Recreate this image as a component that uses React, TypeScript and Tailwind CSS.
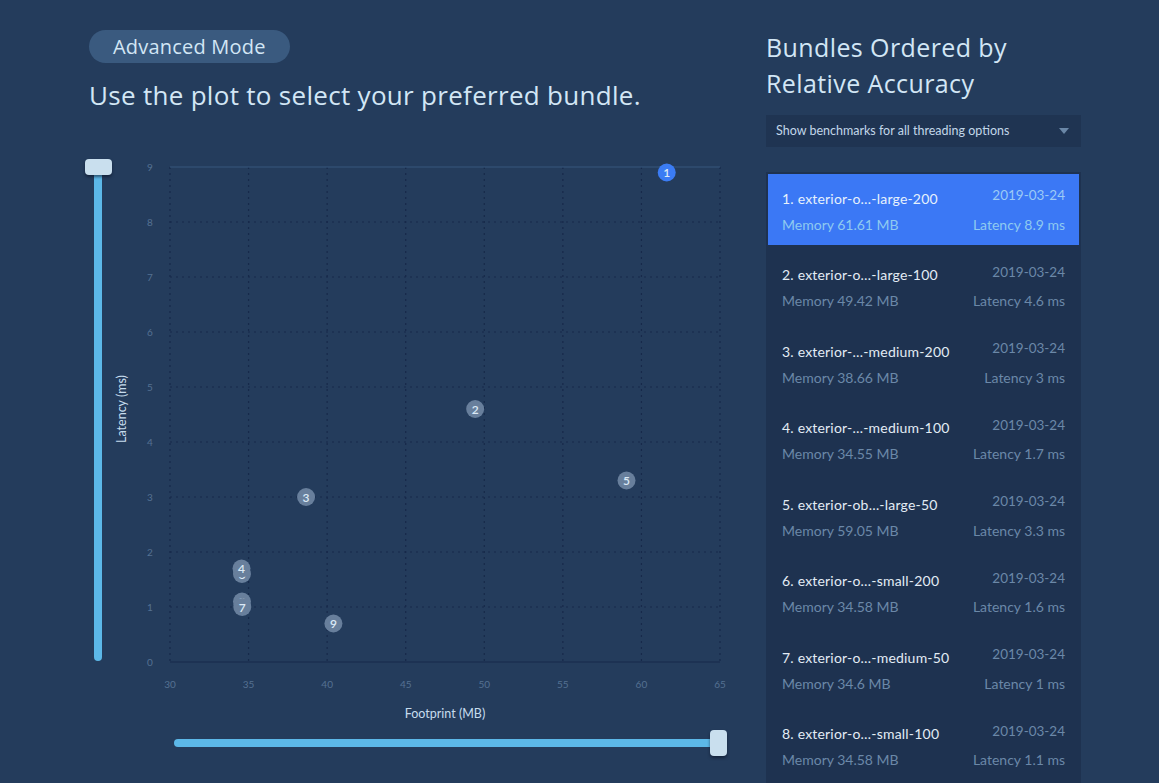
import React from 'react';

interface Bundle {
  id: number;
  name: string;
  date: string;
  memory: string;
  latency: string;
}

interface Point {
  id: number;
  x: number;
  y: number;
}

const bundles: Bundle[] = [
  { id: 1, name: 'exterior-o…-large-200', date: '2019-03-24', memory: '61.61 MB', latency: '8.9 ms' },
  { id: 2, name: 'exterior-o…-large-100', date: '2019-03-24', memory: '49.42 MB', latency: '4.6 ms' },
  { id: 3, name: 'exterior-…-medium-200', date: '2019-03-24', memory: '38.66 MB', latency: '3 ms' },
  { id: 4, name: 'exterior-…-medium-100', date: '2019-03-24', memory: '34.55 MB', latency: '1.7 ms' },
  { id: 5, name: 'exterior-ob…-large-50', date: '2019-03-24', memory: '59.05 MB', latency: '3.3 ms' },
  { id: 6, name: 'exterior-o…-small-200', date: '2019-03-24', memory: '34.58 MB', latency: '1.6 ms' },
  { id: 7, name: 'exterior-o…-medium-50', date: '2019-03-24', memory: '34.6 MB', latency: '1 ms' },
  { id: 8, name: 'exterior-o…-small-100', date: '2019-03-24', memory: '34.58 MB', latency: '1.1 ms' },
];

// drawn in this order so the lower ids end up on top
const points: Point[] = [
  { id: 6, x: 34.58, y: 1.6 },
  { id: 4, x: 34.55, y: 1.7 },
  { id: 8, x: 34.58, y: 1.1 },
  { id: 7, x: 34.6, y: 1.0 },
  { id: 9, x: 40.4, y: 0.7 },
  { id: 3, x: 38.66, y: 3.0 },
  { id: 5, x: 59.05, y: 3.3 },
  { id: 2, x: 49.42, y: 4.6 },
  { id: 1, x: 61.61, y: 8.9 },
];

const sx = (v: number) => 58 + ((v - 30) * 550) / 35;
const sy = (v: number) => 508 - v * 55;

const Plot: React.FC = () => {
  const xTicks = [30, 35, 40, 45, 50, 55, 60, 65];
  const yTicks = [0, 1, 2, 3, 4, 5, 6, 7, 8, 9];

  return (
    <svg width={630} height={570} className="block" style={{ fontFamily: 'Lato, "Open Sans", sans-serif' }}>
      {yTicks.map(t => (
        <g key={`y${t}`}>
          {t > 0 && t < 9 && (
            <line x1={58} x2={608} y1={sy(t)} y2={sy(t)} stroke="#17294a" strokeWidth={1.2} strokeDasharray="2 4" />
          )}
          <text x={38} y={sy(t) + 4} textAnchor="middle" fontSize={10} fill="#557192">
            {t}
          </text>
        </g>
      ))}
      {xTicks.map(t => (
        <g key={`x${t}`}>
          {t > 30 && (
            <line x1={sx(t)} x2={sx(t)} y1={13} y2={508} stroke="#17294a" strokeWidth={1.2} strokeDasharray="2 4" />
          )}
          <text x={sx(t)} y={534} textAnchor="middle" fontSize={10} fill="#557192">
            {t}
          </text>
        </g>
      ))}
      <line x1={58} x2={58} y1={13} y2={508} stroke="#17294a" strokeWidth={1.2} strokeDasharray="2 4" />
      <line x1={58} x2={608} y1={13} y2={13} stroke="#36577c" strokeWidth={1} />
      <line x1={58} x2={608} y1={508} y2={508} stroke="#17294a" strokeWidth={1.2} />

      <text x={333} y={564} textAnchor="middle" fontSize={12.5} fill="#c7dcee">
        Footprint (MB)
      </text>
      <text x={14} y={255} textAnchor="middle" fontSize={12.5} fill="#c7dcee" transform="rotate(-90 14 255)">
        Latency (ms)
      </text>

      {points.map(p => {
        const cx = sx(p.x);
        const cy = sy(p.y);
        const selected = p.id === 1;
        return (
          <g key={p.id}>
            <circle cx={cx} cy={cy} r={9} fill={selected ? '#3b7cf4' : '#687f9c'} />
            <text x={cx} y={cy + 4.5} textAnchor="middle" fontSize={12} fontWeight={600} fill="#dbe9f6">
              {p.id}
            </text>
          </g>
        );
      })}
    </svg>
  );
};

const App: React.FC = () => {
  return (
    <div
      className="min-h-screen w-full overflow-hidden bg-[#243c5c] flex"
      style={{ fontFamily: 'Lato, "Open Sans", sans-serif' }}
    >
      {/* left: plot */}
      <div className="w-[766px] pl-[85px] pt-[30px] shrink-0">
        <div className="ml-[4px] inline-flex h-[33px] items-center rounded-full bg-[#3a5a7f] px-[24px] text-[20px] tracking-[0.2px] text-[#d2e6f5] font-['Open_Sans',sans-serif]">
          Advanced Mode
        </div>
        <h1 className="ml-[4px] mt-[15px] text-[26px] leading-[34px] tracking-[0.3px] text-[#d2e6f5] font-['Open_Sans',sans-serif]">
          Use the plot to select your preferred bundle.
        </h1>

        <div className="mt-[42px] flex">
          <div className="relative w-[27px] h-[502px] mt-[5px]">
            <div className="absolute left-[9px] top-[10px] bottom-0 w-[8px] rounded-b-full bg-[#5cb8e8]" />
            <div className="absolute left-0 top-0 h-[16px] w-[27px] rounded-[4px] bg-[#c9dfee] shadow-[0_2px_3px_rgba(10,20,40,0.6)]" />
          </div>
          <Plot />
        </div>

        <div className="relative ml-[89px] mt-[6px] h-[26px] w-[553px]">
          <div className="absolute left-0 right-[8px] top-[9px] h-[8px] rounded-l-full bg-[#5cb8e8]" />
          <div className="absolute right-0 top-0 h-[26px] w-[17px] rounded-[4px] bg-[#c9dfee] shadow-[0_2px_3px_rgba(10,20,40,0.6)]" />
        </div>
      </div>

      {/* right: list */}
      <div className="w-[315px] pt-[29px] shrink-0">
        <h2 className="text-[25px] leading-[36px] tracking-[0.4px] text-[#d2e6f5] font-['Open_Sans',sans-serif]">
          Bundles Ordered by
          <br />
          Relative Accuracy
        </h2>
        <div className="mt-[14px] flex h-[32px] items-center justify-between bg-[#1f3452] pl-[10px] pr-[12px]">
          <span className="text-[12.5px] text-[#c2d7e9]">Show benchmarks for all threading options</span>
          <svg width={10} height={6} viewBox="0 0 10 6">
            <path d="M0 0 L10 0 L5 6 Z" fill="#6a87a7" />
          </svg>
        </div>

        <div className="mt-[25px] flex flex-col gap-[5.5px] bg-[#1e3250] px-[2px] pt-[2px] pb-[20px]">
          {bundles.map(b => {
            const selected = b.id === 1;
            return (
              <div
                key={b.id}
                className={`flex h-[71px] flex-col justify-center gap-[5px] pl-[14px] pr-[14px] ${selected ? 'bg-[#3b78f5]' : ''}`}
              >
                <div className="flex items-center justify-between pt-[3px]">
                  <span className={`text-[14px] tracking-[0.2px] ${selected ? 'text-[#e6f1fc]' : 'text-[#e3ecf5]'}`}>
                    {b.id}.&nbsp;{b.name}
                  </span>
                  <span className={`text-[13.5px] -mt-[5px] ${selected ? 'text-[#9ccaf5]' : 'text-[#6b88a8]'}`}>
                    {b.date}
                  </span>
                </div>
                <div className={`flex items-center justify-between text-[14px] ${selected ? 'text-[#8fcaf0]' : 'text-[#6b88a8]'}`}>
                  <span>Memory {b.memory}</span>
                  <span>Latency {b.latency}</span>
                </div>
              </div>
            );
          })}
        </div>
      </div>
    </div>
  );
};

export default App;
